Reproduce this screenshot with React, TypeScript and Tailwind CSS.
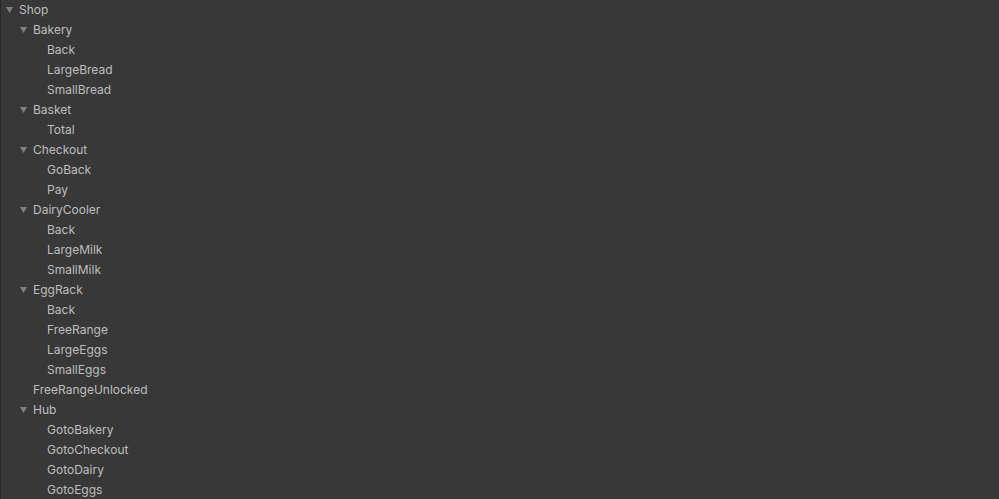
type Node = { label: string; children?: Node[] };

const tree: Node[] = [
  {
    label: 'Shop',
    children: [
      { label: 'Bakery', children: [{ label: 'Back' }, { label: 'LargeBread' }, { label: 'SmallBread' }] },
      { label: 'Basket', children: [{ label: 'Total' }] },
      { label: 'Checkout', children: [{ label: 'GoBack' }, { label: 'Pay' }] },
      { label: 'DairyCooler', children: [{ label: 'Back' }, { label: 'LargeMilk' }, { label: 'SmallMilk' }] },
      {
        label: 'EggRack',
        children: [{ label: 'Back' }, { label: 'FreeRange' }, { label: 'LargeEggs' }, { label: 'SmallEggs' }],
      },
      { label: 'FreeRangeUnlocked' },
      {
        label: 'Hub',
        children: [{ label: 'GotoBakery' }, { label: 'GotoCheckout' }, { label: 'GotoDairy' }, { label: 'GotoEggs' }],
      },
    ],
  },
];

const indents = ['pl-[4px]', 'pl-[18px]', 'pl-[32px]'];

const Row = ({ node, depth }: { node: Node; depth: number }) => (
  <>
    <div className={`flex h-5 items-start pt-[2px] ${indents[depth]}`}>
      <span className="flex w-[14px] shrink-0 pl-px">
        {node.children && (
          <svg width="7" height="6" viewBox="0 0 7 6" className="mt-[5px]">
            <path d="M0 0H7L3.5 6Z" fill="#808080" />
          </svg>
        )}
      </span>
      <span className="text-[12px] leading-4 text-[#bebebe]">{node.label}</span>
    </div>
    {node.children?.map((c, i) => <Row key={i} node={c} depth={depth + 1} />)}
  </>
);

export default function App() {
  return (
    <div className="h-[499px] w-[999px] overflow-hidden border-l border-[#282828] bg-[#383838] font-['Inter',sans-serif]">
      {tree.map((n, i) => (
        <Row key={i} node={n} depth={0} />
      ))}
    </div>
  );
}
